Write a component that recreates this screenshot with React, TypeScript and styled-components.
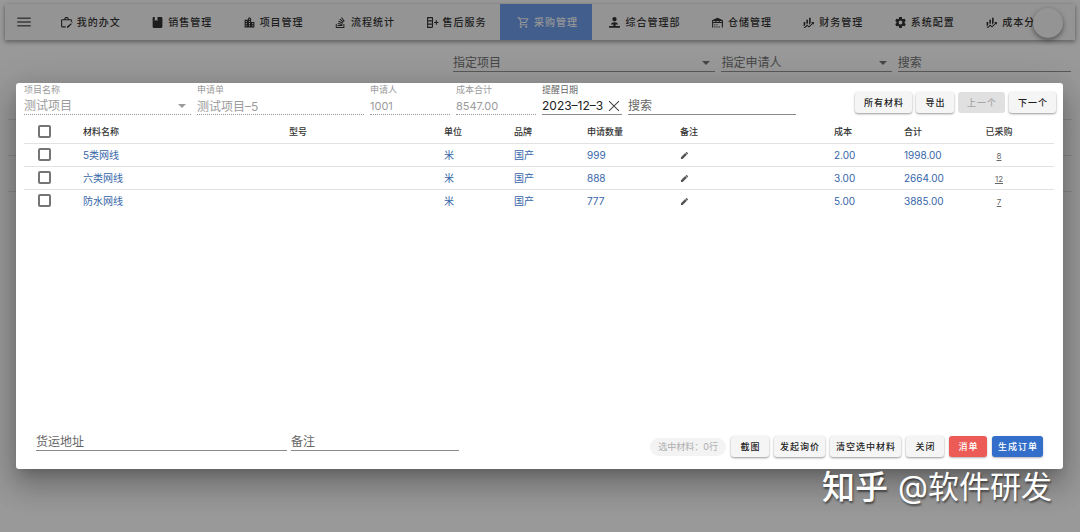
import React from "react";
import styled, { createGlobalStyle, css } from "styled-components";

const GlobalStyle = createGlobalStyle`
  *, *::before, *::after { box-sizing: border-box; }
  body {
    margin: 0;
    background: #fff;
    color: #212121;
    font-family: Inter, "Noto Sans CJK SC", sans-serif;
    font-size: 10px;
  }
  button, input, select { font: inherit; color: inherit; }
`;

/* ---------- page behind the dialog ---------- */

const Page = styled.div`
  position: relative;
  min-height: 100vh;
  overflow: hidden;
`;

const AppBar = styled.header`
  position: relative;
  display: flex;
  align-items: center;
  height: 36px;
  margin: 4px 5px 0;
  background: #f5f5f5;
  box-shadow: 0 2px 4px rgba(0, 0, 0, 0.3), 0 1px 6px rgba(0, 0, 0, 0.2);
`;

const MenuButton = styled.button`
  display: flex;
  justify-content: center;
  width: 38px;
  padding: 0;
  border: 0;
  background: none;
  color: #555;
`;

const Tabs = styled.nav`
  display: flex;
  flex: 1;
  align-self: stretch;
  padding-right: 15px;
`;

const Tab = styled.a<{ $active?: boolean }>`
  display: flex;
  flex: 1 0 auto;
  align-items: center;
  justify-content: center;
  gap: 4px;
  padding: 0 11px 0 14px;
  color: ${(p) => (p.$active ? "#f4f6fa" : "#1a1a1a")};
  background: ${(p) => (p.$active ? "#5e92e8" : "transparent")};
  font-size: 10px;
  font-weight: 500;
  letter-spacing: 1px;
  line-height: 16px;
  text-decoration: none;
  white-space: nowrap;
`;

const Fab = styled.button`
  position: absolute;
  top: 4px;
  right: 12px;
  width: 30px;
  height: 30px;
  border: 0;
  border-radius: 50%;
  background: #f5f5f5;
  box-shadow: 0 2px 5px rgba(0, 0, 0, 0.5);
`;

const Filters = styled.form`
  display: grid;
  grid-template-columns: 262fr 170fr 173fr;
  gap: 6px;
  padding: 14px 9px 0 453px;
  color: #666;
`;

const BackRows = styled.div`
  display: grid;
  grid-template-rows: 48px 36px 36px;
  margin: 0 8px;
`;

const BackRow = styled.div`
  border-bottom: 1px solid #e4e4e4;
`;

const Overlay = styled.div`
  position: absolute;
  inset: 0;
  display: flex;
  align-items: flex-start;
  padding: 83px 17px 0 16px;
  background: rgba(33, 33, 33, 0.46);
`;

/* ---------- shared controls ---------- */

const Field = styled.label<{ $muted?: boolean }>`
  display: flex;
  flex-direction: column;
  min-width: 0;
  color: ${(p) => (p.$muted ? "#9b9b9b" : "#666")};
`;

const Caption = styled.span`
  font-size: 9px;
  line-height: 14px;
  white-space: nowrap;
`;

const Control = styled.span<{ $dotted?: boolean }>`
  display: flex;
  align-items: center;
  min-width: 0;
  height: 18px;
  border-bottom: 1px ${(p) => (p.$dotted ? "dotted #999" : "solid #8a8a8a")};
`;

const TextInput = styled.input<{ $numeric?: boolean; $dark?: boolean }>`
  flex: 1;
  min-width: 0;
  width: 100%;
  height: 17px;
  padding: 0;
  border: 0;
  outline: 0;
  background: none;
  color: ${(p) => (p.$dark ? "#222" : "inherit")};
  font-size: ${(p) => (p.$numeric ? "11px" : "12px")};
  &::placeholder { color: #666; opacity: 1; }
`;

const Select = styled.select`
  flex: 1;
  min-width: 0;
  height: 17px;
  padding: 0;
  border: 0;
  outline: 0;
  appearance: none;
  background: none;
  font-size: 12px;
  opacity: 1;
`;

const Caret = styled.span`
  margin-right: 5px;
  border: 4px solid transparent;
  border-top-color: currentColor;
  border-bottom: 0;
`;

const ClearButton = styled.button`
  display: flex;
  padding: 0 0 0 3px;
  border: 0;
  background: none;
  color: #444;
`;

const tones = {
  plain: css`
    background: #f5f5f5;
    color: #1d1d1d;
    box-shadow: 0 1px 2px rgba(0, 0, 0, 0.3), 0 1px 3px rgba(0, 0, 0, 0.12);
  `,
  disabled: css`
    background: #e0e0e0;
    color: #a6a6a6;
  `,
  danger: css`
    background: #ec5b56;
    color: #fff;
    box-shadow: 0 1px 2px rgba(0, 0, 0, 0.3);
  `,
  primary: css`
    background: #336fca;
    color: #fff;
    box-shadow: 0 1px 2px rgba(0, 0, 0, 0.3);
  `,
};

const Button = styled.button<{ $tone?: keyof typeof tones; $compact?: boolean }>`
  min-width: 38px;
  height: 21px;
  padding: ${(p) => (p.$compact ? "0 5px 0 6px" : "0 8px 0 9px")};
  border: 0;
  border-radius: 3px;
  font-size: 9px;
  font-weight: 500;
  letter-spacing: 1px;
  line-height: 21px;
  white-space: nowrap;
  ${(p) => tones[p.$tone ?? "plain"]}
`;

/* ---------- dialog ---------- */

const Dialog = styled.section`
  display: flex;
  flex: 1;
  flex-direction: column;
  min-width: 0;
  min-height: 386px;
  border-radius: 3px;
  background: #fff;
  box-shadow: 0 8px 12px -5px rgba(0, 0, 0, 0.2),
    0 18px 28px 2px rgba(0, 0, 0, 0.16), 0 7px 34px 6px rgba(0, 0, 0, 0.14);
`;

const DialogHead = styled.header`
  display: flex;
  align-items: flex-start;
  justify-content: space-between;
  padding: 0 7px 0 8px;
`;

const FieldRow = styled.div`
  display: grid;
  flex: 0 1 772px;
  grid-template-columns: 167fr 167fr 80fr 80fr 80fr 168fr;
  gap: 6px;
  align-items: end;
`;

const HeadActions = styled.div`
  display: flex;
  gap: 4px;
  padding-top: 9px;
`;

const Table = styled.table`
  width: calc(100% - 17px);
  margin: 5px 9px 0 8px;
  border-collapse: collapse;
  table-layout: fixed;
`;

const Th = styled.th`
  height: 23px;
  padding: 0;
  color: #333;
  font-size: 9px;
  font-weight: 500;
  text-align: left;
  white-space: nowrap;
  &:last-child { text-align: center; }
`;

const Row = styled.tr`
  & + &, thead + tbody > & { border-top: 1px solid #e2e2e2; }
`;

const Td = styled.td`
  height: 23px;
  padding: 0;
  color: #3565a8;
  font-size: 10px;
  line-height: 16px;
  white-space: nowrap;
`;

const CheckCell = styled.td`
  padding: 0 0 0 14px;
`;

const Checkbox = styled.input`
  display: block;
  width: 13px;
  height: 13px;
  margin: 0;
  appearance: none;
  border: 2px solid #757575;
  border-radius: 2px;
  background: #fff;
`;

const EditButton = styled.button`
  display: flex;
  padding: 2px 0 0;
  border: 0;
  background: none;
  color: #555;
`;

const BoughtCell = styled.td`
  padding: 0;
  text-align: center;
`;

const BoughtLink = styled.a`
  color: #666;
  font-size: 8px;
`;

const DialogFoot = styled.footer`
  display: flex;
  align-items: flex-end;
  justify-content: space-between;
  margin-top: auto;
  padding: 0 20px 12px 20px;
`;

const FootFields = styled.div`
  display: grid;
  flex: 0 1 423px;
  grid-template-columns: 251fr 168fr;
  gap: 4px;
  padding-bottom: 6px;
`;

const FootActions = styled.div`
  display: flex;
  align-items: center;
  gap: 5px;
`;

const Chip = styled.span`
  padding: 0 8px;
  border-radius: 9px;
  background: #f3f3f3;
  color: #adadad;
  font-size: 9px;
  line-height: 18px;
  white-space: nowrap;
`;

const Watermark = styled.div`
  position: absolute;
  right: 28px;
  bottom: 24px;
  display: flex;
  gap: 10px;
  color: #fff;
  font-size: 31px;
  line-height: 42px;
  text-shadow: 1px 2px 2px rgba(0, 0, 0, 0.5);
  white-space: nowrap;
`;

const WatermarkBrand = styled.strong`
  font-size: 33px;
  font-weight: 500;
`;

/* ---------- icons ---------- */

const icons: Record<string, string> = {
  menu: "M3 6H21V8H3V6M3 11H21V13H3V11M3 16H21V18H3V16Z",
  briefcaseEdit:
    "M20.4 13.2 21.8 14.6 15 21.5H12.9V19.4L20.4 13.2M10 2H14L16 4V6H20A2 2 0 0 1 22 8V10.5H20V8H4V19H10.5V21H4A2 2 0 0 1 2 19V8A2 2 0 0 1 4 6H8V4L10 2M14 6V4H10V6H14M22.6 12.3 23.5 11.4 22 10 21.2 10.9Z",
  book: "M5 2H7V9L9.5 7.5 12 9V2H19A2 2 0 0 1 21 4V20A2 2 0 0 1 19 22H5A2 2 0 0 1 3 20V4A2 2 0 0 1 5 2Z",
  city: "M19 15H17V13H19M19 19H17V17H19M13 7H11V5H13M13 11H11V9H13M13 15H11V13H13M13 19H11V17H13M7 11H5V9H7M7 15H5V13H7M7 19H5V17H7M15 11V5L12 2 9 5V7H3V21H21V11H15Z",
  stack:
    "M17.4 20.2V14.9H19.1V22H3.3V14.9H5V20.2H17.4M6.8 14.7 7.1 12.9 15.8 14.8 15.5 16.5 6.8 14.7M7.9 10.5 8.7 8.9 16.8 12.6 16 14.2 7.9 10.5M10.1 6.5 11.3 5.1 18.1 10.8 16.9 12.1 10.1 6.5M14.5 2.3 19.8 9.4 18.4 10.4 13.1 3.3 14.5 2.3M6.6 18.4V16.7H15.5V18.4H6.6Z",
  columnAdd:
    "M11 2A2 2 0 0 1 13 4V20A2 2 0 0 1 11 22H2V2H11M4 10V14H11V10H4M4 16V20H11V16H4M4 4V8H11V4H4M15 11H18V8H20V11H23V13H20V16H18V13H15V11Z",
  cart: "M17 18A2 2 0 1 1 17 22A2 2 0 0 1 17 18M7 18A2 2 0 1 1 7 22A2 2 0 0 1 7 18M1 2H4.3L5.2 4H20A1 1 0 0 1 20.9 5.5L17.3 12A2 2 0 0 1 15.6 13H8.1L7.2 14.6 7.1 14.8A.2.2 0 0 0 7.3 15H19V17H7A2 2 0 0 1 5.2 14L6.6 11.6 3 4H1V2M6.1 6 8.5 11H15.5L18.3 6H6.1Z",
  desk: "M12 2A4 4 0 1 1 12 10A4 4 0 0 1 12 2M12 11.5C15.5 11.5 18 13 18.5 15.5H14V18.5H22V21.5H2V18.5H10V15.5H5.5C6 13 8.5 11.5 12 11.5Z",
  warehouse:
    "M6 19H8V21H6V19M12 3 2 8V21H4V13H20V21H22V8L12 3M8 11H4V9H8V11M14 11H10V9H14V11M20 11H16V9H20V11M6 15H8V17H6V15M10 15H12V17H10V15M10 19H12V21H10V19M14 19H16V21H14V19Z",
  finance:
    "M6 16.5 3 19.4V11H6M11 14.7 9.4 13.3 8 14.6V7H11M16 13 13 16V3H16M18.8 12.8 17 11H22V16L20.2 14.2 13 21.4 9.5 18.3 5.8 22H3L9.4 15.7 13 18.7",
  cog: "M12 15.5A3.5 3.5 0 1 1 12 8.5A3.5 3.5 0 0 1 12 15.5M19.4 13C19.5 12.3 19.5 11.7 19.4 11L21.5 9.4C21.7 9.2 21.8 9 21.6 8.7L19.6 5.3C19.5 5.1 19.2 5 19 5.1L16.5 6.1C16 5.7 15.4 5.4 14.9 5.1L14.5 2.4C14.5 2.2 14.3 2 14 2H10C9.7 2 9.5 2.2 9.5 2.4L9.1 5.1C8.6 5.4 8 5.7 7.5 6.1L5 5.1C4.8 5 4.5 5.1 4.4 5.3L2.4 8.7C2.2 9 2.3 9.2 2.5 9.4L4.6 11C4.5 11.7 4.5 12.3 4.6 13L2.5 14.6C2.3 14.8 2.2 15 2.4 15.3L4.4 18.7C4.5 18.9 4.8 19 5 18.9L7.5 17.9C8 18.3 8.6 18.6 9.1 18.9L9.5 21.6C9.5 21.8 9.7 22 10 22H14C14.3 22 14.5 21.8 14.5 21.6L14.9 18.9C15.4 18.6 16 18.3 16.5 17.9L19 18.9C19.2 19 19.5 18.9 19.6 18.7L21.6 15.3C21.8 15 21.7 14.8 21.5 14.6Z",
  close:
    "M20 5.1 18.9 4 12 10.9 5.1 4 4 5.1 10.9 12 4 18.9 5.1 20 12 13.1 18.9 20 20 18.9 13.1 12Z",
  pencil:
    "M21 7.5C21.6 6.9 21.6 6 21 5.4L18.6 3C18 2.4 17.1 2.4 16.5 3L14.8 4.7 19.3 9.2M2.5 16.8V21.5H7.2L18.4 10.3 13.7 5.6Z",
};

function Icon({ name, size = 13 }: { name: string; size?: number }) {
  return (
    <svg width={size} height={size} viewBox="0 0 24 24" fill="currentColor" fillRule="evenodd" aria-hidden="true">
      <path d={icons[name]} />
    </svg>
  );
}

/* ---------- data ---------- */

const tabs = [
  ["briefcaseEdit", "我的办文"],
  ["book", "销售管理"],
  ["city", "项目管理"],
  ["stack", "流程统计"],
  ["columnAdd", "售后服务"],
  ["cart", "采购管理"],
  ["desk", "综合管理部"],
  ["warehouse", "仓储管理"],
  ["finance", "财务管理"],
  ["cog", "系统配置"],
  ["finance", "成本分析"],
];

const materials = [
  { name: "5类网线", unit: "米", brand: "国产", count: 999, cost: "2.00", total: "1998.00", bought: 8 },
  { name: "六类网线", unit: "米", brand: "国产", count: 888, cost: "3.00", total: "2664.00", bought: 12 },
  { name: "防水网线", unit: "米", brand: "国产", count: 777, cost: "5.00", total: "3885.00", bought: 7 },
];

const checkShare = 59;

const columns = [
  { label: "材料名称", share: 206 },
  { label: "型号", share: 155 },
  { label: "单位", share: 70 },
  { label: "品牌", share: 73 },
  { label: "申请数量", share: 93 },
  { label: "备注", share: 154 },
  { label: "成本", share: 70 },
  { label: "合计", share: 40 },
  { label: "已采购", share: 110 },
];

const totalShare = columns.reduce((sum, c) => sum + c.share, checkShare);
const toPercent = (share: number) => `${(share / totalShare) * 100}%`;

export default function App() {
  return (
    <Page>
      <GlobalStyle />
      <AppBar>
        <MenuButton type="button" aria-label="菜单">
          <Icon name="menu" size={18} />
        </MenuButton>
        <Tabs>
          {tabs.map(([icon, label]) => (
            <Tab key={label} href="#" $active={label === "采购管理"}>
              <Icon name={icon} />
              {label}
            </Tab>
          ))}
        </Tabs>
        <Fab type="button" aria-label="账户" />
      </AppBar>
      <Filters>
        <Control>
          <Select aria-label="指定项目" defaultValue="">
            <option value="">指定项目</option>
          </Select>
          <Caret />
        </Control>
        <Control>
          <Select aria-label="指定申请人" defaultValue="">
            <option value="">指定申请人</option>
          </Select>
          <Caret />
        </Control>
        <Control>
          <TextInput aria-label="搜索" placeholder="搜索" />
        </Control>
      </Filters>
      <BackRows>
        <BackRow />
        <BackRow />
        <BackRow />
      </BackRows>

      <Overlay>
        <Dialog role="dialog" aria-label="采购材料">
          <DialogHead>
            <FieldRow>
              <Field $muted>
                <Caption>项目名称</Caption>
                <Control $dotted>
                  <Select disabled>
                    <option>测试项目</option>
                  </Select>
                  <Caret />
                </Control>
              </Field>
              <Field $muted>
                <Caption>申请单</Caption>
                <Control $dotted>
                  <TextInput disabled defaultValue="测试项目–5" />
                </Control>
              </Field>
              <Field $muted>
                <Caption>申请人</Caption>
                <Control $dotted>
                  <TextInput $numeric disabled defaultValue="1001" />
                </Control>
              </Field>
              <Field $muted>
                <Caption>成本合计</Caption>
                <Control $dotted>
                  <TextInput $numeric disabled defaultValue="8547.00" />
                </Control>
              </Field>
              <Field>
                <Caption>提醒日期</Caption>
                <Control>
                  <TextInput $dark defaultValue="2023–12–31" />
                  <ClearButton type="button" aria-label="清除">
                    <Icon name="close" size={16} />
                  </ClearButton>
                </Control>
              </Field>
              <Control>
                <TextInput aria-label="搜索" placeholder="搜索" />
              </Control>
            </FieldRow>
            <HeadActions>
              <Button type="button">所有材料</Button>
              <Button type="button">导出</Button>
              <Button type="button" $tone="disabled" disabled>上一个</Button>
              <Button type="button">下一个</Button>
            </HeadActions>
          </DialogHead>

          <Table>
            <colgroup>
              <col style={{ width: toPercent(checkShare) }} />
              {columns.map((c) => (
                <col key={c.label} style={{ width: toPercent(c.share) }} />
              ))}
            </colgroup>
            <thead>
              <Row>
                <CheckCell>
                  <Checkbox type="checkbox" aria-label="全选" />
                </CheckCell>
                {columns.map((c) => (
                  <Th key={c.label}>{c.label}</Th>
                ))}
              </Row>
            </thead>
            <tbody>
              {materials.map((m) => (
                <Row key={m.name}>
                  <CheckCell>
                    <Checkbox type="checkbox" aria-label={m.name} />
                  </CheckCell>
                  <Td>{m.name}</Td>
                  <Td />
                  <Td>{m.unit}</Td>
                  <Td>{m.brand}</Td>
                  <Td>{m.count}</Td>
                  <Td>
                    <EditButton type="button" aria-label="编辑备注">
                      <Icon name="pencil" size={9} />
                    </EditButton>
                  </Td>
                  <Td>{m.cost}</Td>
                  <Td>{m.total}</Td>
                  <BoughtCell>
                    <BoughtLink href="#">{m.bought}</BoughtLink>
                  </BoughtCell>
                </Row>
              ))}
            </tbody>
          </Table>

          <DialogFoot>
            <FootFields>
              <Control>
                <TextInput aria-label="货运地址" placeholder="货运地址" />
              </Control>
              <Control>
                <TextInput aria-label="备注" placeholder="备注" />
              </Control>
            </FootFields>
            <FootActions>
              <Chip>选中材料：0行</Chip>
              <Button type="button" $compact>截图</Button>
              <Button type="button" $compact>发起询价</Button>
              <Button type="button" $compact>清空选中材料</Button>
              <Button type="button" $compact>关闭</Button>
              <Button type="button" $compact $tone="danger">消单</Button>
              <Button type="button" $compact $tone="primary">生成订单</Button>
            </FootActions>
          </DialogFoot>
        </Dialog>
      </Overlay>
      <Watermark>
        <WatermarkBrand>知乎</WatermarkBrand>
        <span>@软件研发</span>
      </Watermark>
    </Page>
  );
}
